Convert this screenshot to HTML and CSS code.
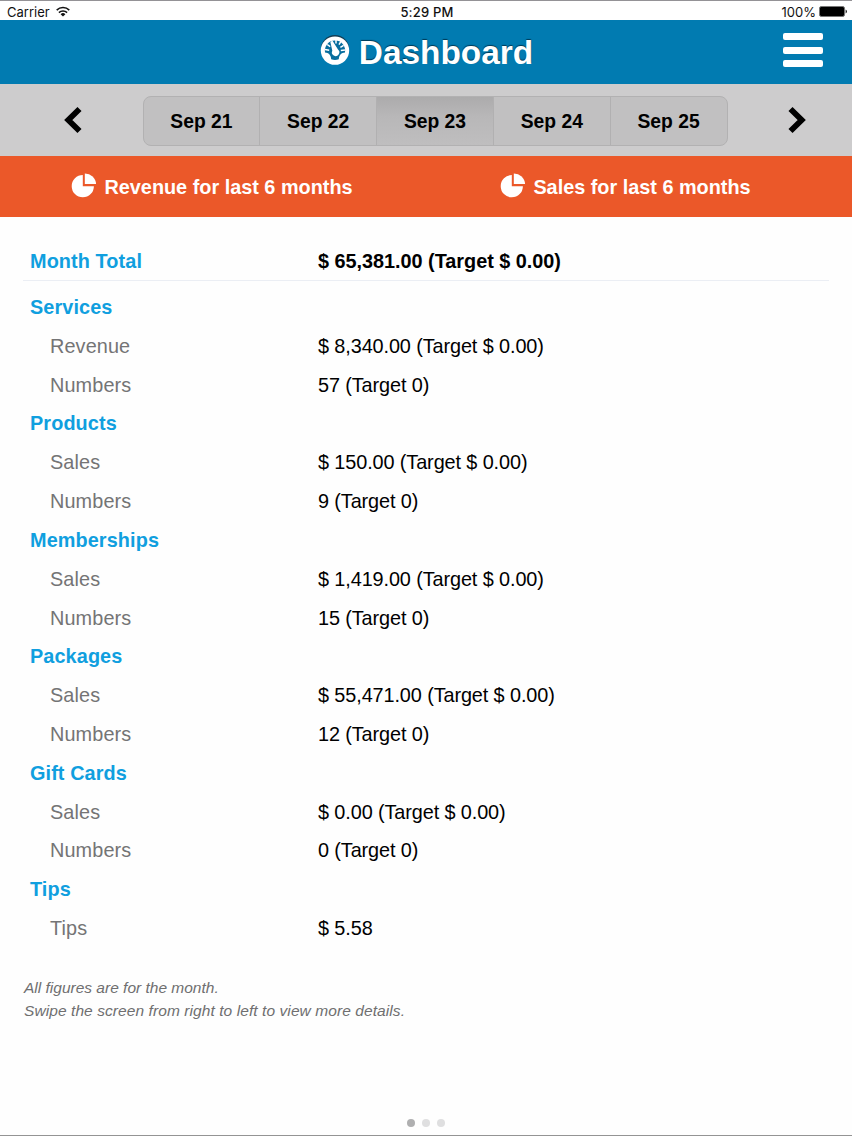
FILE: index.html
```html
<!DOCTYPE html>
<html lang="en">
<head>
<meta charset="utf-8">
<title>Dashboard</title>
<link rel="stylesheet" href="styles.css">
</head>
<body>
<div class="status">
  <div class="status-side">
    <span class="carrier">Carrier</span>
    <svg class="wifi" viewBox="0 0 14 11" width="14" height="11"><g fill="none" stroke="#111" stroke-width="1.5"><path d="M.7 4.1a9 9 0 0 1 12.6 0"/><path d="M2.9 6.6a5.8 5.8 0 0 1 8.2 0"/></g><path d="M4.6 8.2a3.4 3.4 0 0 1 4.8 0L7 10.6z" fill="#111"/></svg>
  </div>
  <span class="clock">5:29 PM</span>
  <div class="status-side right">
    <span class="percent">100%</span>
    <svg class="battery" viewBox="0 0 28 11" width="28" height="11"><rect x=".5" y=".5" width="25" height="10" rx="1.8" fill="#000" stroke="#777"/><path d="M26.6 3.6q1.3.4 1.3 1.9t-1.3 1.9z" fill="#111"/></svg>
  </div>
</div>
<header class="header">
  <h1 class="title">
    <svg class="gauge" viewBox="0 0 30 31" width="30" height="31">
      <circle cx="15" cy="14" r="14" fill="#123c53"/>
      <circle cx="15" cy="15.6" r="14.2" fill="#fff"/>
      <path d="M5 17.6a10.2 10.2 0 1 1 20 0c-3.6.2-5.8 2.200-6.200 6.600q-3.800 1.600-7.600 0c-.4-4.400-2.600-6.400-6.200-6.600z" fill="#086e9e"/>
      <g stroke="#fff" stroke-width="1.5"><path d="M5 14.600l4.200.7M7.200 9.500l3 2.200M16 5v3.500M20.800 6.600l-1.800 3M23.600 10.300l-3.200 2M25 14.900l-4.200.6"/></g>
      <path d="M10.300 6.800l2.200-1.100 5.500 8.800a3.700 3.700 0 1 1-5.700 1.200z" fill="#fff"/>
    </svg>
    <span>Dashboard</span>
  </h1>
  <div class="menu"><span class="bar"></span><span class="bar"></span><span class="bar"></span></div>
</header>
<nav class="dates">
  <svg class="chevron" viewBox="0 0 18 28" width="18" height="28"><path d="M15.500 3L4.300 14l11.200 11" fill="none" stroke="#000" stroke-width="5.8"/></svg>
  <div class="segments">
    <span class="segment">Sep 21</span><span class="segment">Sep 22</span><span class="segment active">Sep 23</span><span class="segment">Sep 24</span><span class="segment">Sep 25</span>
  </div>
  <svg class="chevron" viewBox="0 0 18 28" width="18" height="28"><path d="M2.500 3l11.200 11L2.500 25" fill="none" stroke="#000" stroke-width="5.8"/></svg>
</nav>
<div class="reports">
  <div class="report"><svg class="pie" viewBox="0 0 26 25" width="26" height="25"><path d="M11.8 2.1A11.1 11.1 0 1 0 22.9 13.2H11.8z" fill="#fff"/><path d="M13.8.4V11.1h11.3A11.2 11.2 0 0 0 13.8.4z" fill="#fff"/></svg><span>Revenue for last 6 months</span></div>
  <div class="report"><svg class="pie" viewBox="0 0 26 25" width="26" height="25"><path d="M11.8 2.1A11.1 11.1 0 1 0 22.9 13.2H11.8z" fill="#fff"/><path d="M13.8.4V11.1h11.3A11.2 11.2 0 0 0 13.8.4z" fill="#fff"/></svg><span>Sales for last 6 months</span></div>
</div>
<main class="content">
  <div class="total"><span class="heading">Month Total</span><b class="amount">$ 65,381.00 (Target $ 0.00)</b></div>
  <section class="figures">
    <h2 class="row heading">Services</h2>
    <div class="row"><span class="label">Revenue</span><span class="value">$ 8,340.00 (Target $ 0.00)</span></div>
    <div class="row"><span class="label">Numbers</span><span class="value">57 (Target 0)</span></div>
    <h2 class="row heading">Products</h2>
    <div class="row"><span class="label">Sales</span><span class="value">$ 150.00 (Target $ 0.00)</span></div>
    <div class="row"><span class="label">Numbers</span><span class="value">9 (Target 0)</span></div>
    <h2 class="row heading">Memberships</h2>
    <div class="row"><span class="label">Sales</span><span class="value">$ 1,419.00 (Target $ 0.00)</span></div>
    <div class="row"><span class="label">Numbers</span><span class="value">15 (Target 0)</span></div>
    <h2 class="row heading">Packages</h2>
    <div class="row"><span class="label">Sales</span><span class="value">$ 55,471.00 (Target $ 0.00)</span></div>
    <div class="row"><span class="label">Numbers</span><span class="value">12 (Target 0)</span></div>
    <h2 class="row heading">Gift Cards</h2>
    <div class="row"><span class="label">Sales</span><span class="value">$ 0.00 (Target $ 0.00)</span></div>
    <div class="row"><span class="label">Numbers</span><span class="value">0 (Target 0)</span></div>
    <h2 class="row heading">Tips</h2>
    <div class="row"><span class="label">Tips</span><span class="value">$ 5.58</span></div>
  </section>
  <p class="note">All figures are for the month.<br><span class="hint">Swipe the screen from right to left to view more details.</span></p>
</main>
<footer class="pager"><span class="dot current"></span><span class="dot"></span><span class="dot"></span></footer>
</body>
</html>
```
FILE: styles.css
```css
* { box-sizing: border-box; }
body {
  margin: 0;
  height: 1136px;
  display: flex;
  flex-direction: column;
  overflow: hidden;
  background: #fefefe;
  border-bottom: 1px solid #949494;
  color: #000;
  font: 19.85px "Liberation Sans", Arial, sans-serif;
}
svg { display: block; flex: none; }
.status {
  height: 20px;
  flex: none;
  display: grid;
  grid-template-columns: 1fr auto 1fr;
  align-items: center;
  padding: 2px 5px 0 7px;
  border-top: 1px solid #949296;
  background: #fff;
  font: 13px Inter, sans-serif;
  color: #111;
}
.status-side { display: flex; align-items: center; gap: 6px; }
.right { justify-content: flex-end; gap: 3px; }
.clock { font-weight: 500; letter-spacing: 0.2px; }
.header {
  height: 64px;
  flex: none;
  display: grid;
  grid-template-columns: 1fr auto 1fr;
  align-items: center;
  background: #017bb1;
  color: #fff;
}
.title {
  grid-column: 2;
  display: flex;
  align-items: center;
  gap: 9px;
  margin: 0;
  padding: 2px 0 0 1px;
  font-size: 33.4px;
  line-height: 62px;
  text-shadow: 0 -1px 1px #003955;
}
.gauge { margin-top: -5px; }
.menu {
  justify-self: end;
  display: flex;
  flex-direction: column;
  gap: 6.5px;
  margin: -4px 29px 0 0;
}
.bar { width: 40px; height: 7px; border-radius: 2px; background: #fff; }
.dates {
  height: 72px;
  flex: none;
  display: flex;
  align-items: center;
  justify-content: space-between;
  padding: 0 46px 0 64px;
  background: #cdcccd;
}
.chevron { margin-top: -1px; }
.segments {
  width: 585px;
  height: 50px;
  display: flex;
  margin-top: 1px;
  overflow: hidden;
  border: 1px solid #b2b1b2;
  border-radius: 8px;
  background: #c1c0c1;
}
.segment {
  flex: 1;
  text-align: center;
  font-size: 19.3px;
  font-weight: bold;
  line-height: 50px;
}
.segment + .segment { border-left: 1px solid #b1b0b1; }
.active { background: linear-gradient(#acabac, #b8b7b8 40%, #bfbebf); }
.reports {
  height: 61px;
  flex: none;
  display: grid;
  grid-template-columns: 1fr 1fr;
  padding-top: 1px;
  background: #eb5829;
  color: #fff;
  font-weight: bold;
}
.report { display: flex; align-items: center; justify-content: center; gap: 7px; }
.report:first-child { padding-right: 2px; }
.report:last-child { padding-right: 27px; }
.pie { margin-top: -3px; }
.content { flex: 1; padding: 24px 23px 0; }
.total {
  height: 40px;
  display: grid;
  grid-template-columns: 288px 1fr;
  padding: 0 7px;
  border-bottom: 1px solid #ebeef4;
  line-height: 40px;
}
.amount { letter-spacing: -0.02px; }
.heading { color: #109fdf; font-weight: bold; letter-spacing: 0.1px; }
.figures { padding: 7px 7px 0; }
.row {
  height: 38.82px;
  display: grid;
  grid-template-columns: 268px 1fr;
  margin: 0;
  padding-left: 20px;
  font-size: inherit;
  line-height: 38.82px;
}
.row.heading { padding-left: 0; }
.label { color: #747475; letter-spacing: 0.12px; }
.value { letter-spacing: -0.1px; }
.note {
  margin: 28px 1px 0;
  color: #6f6f70;
  font-size: 15.5px;
  font-style: italic;
  line-height: 23.4px;
}
.hint { letter-spacing: 0.08px; }
.pager { display: flex; justify-content: center; gap: 7px; height: 16px; flex: none; }
.dot { width: 8px; height: 8px; border-radius: 50%; background: #dfdfe0; }
.current { background: #afafb0; }
```
